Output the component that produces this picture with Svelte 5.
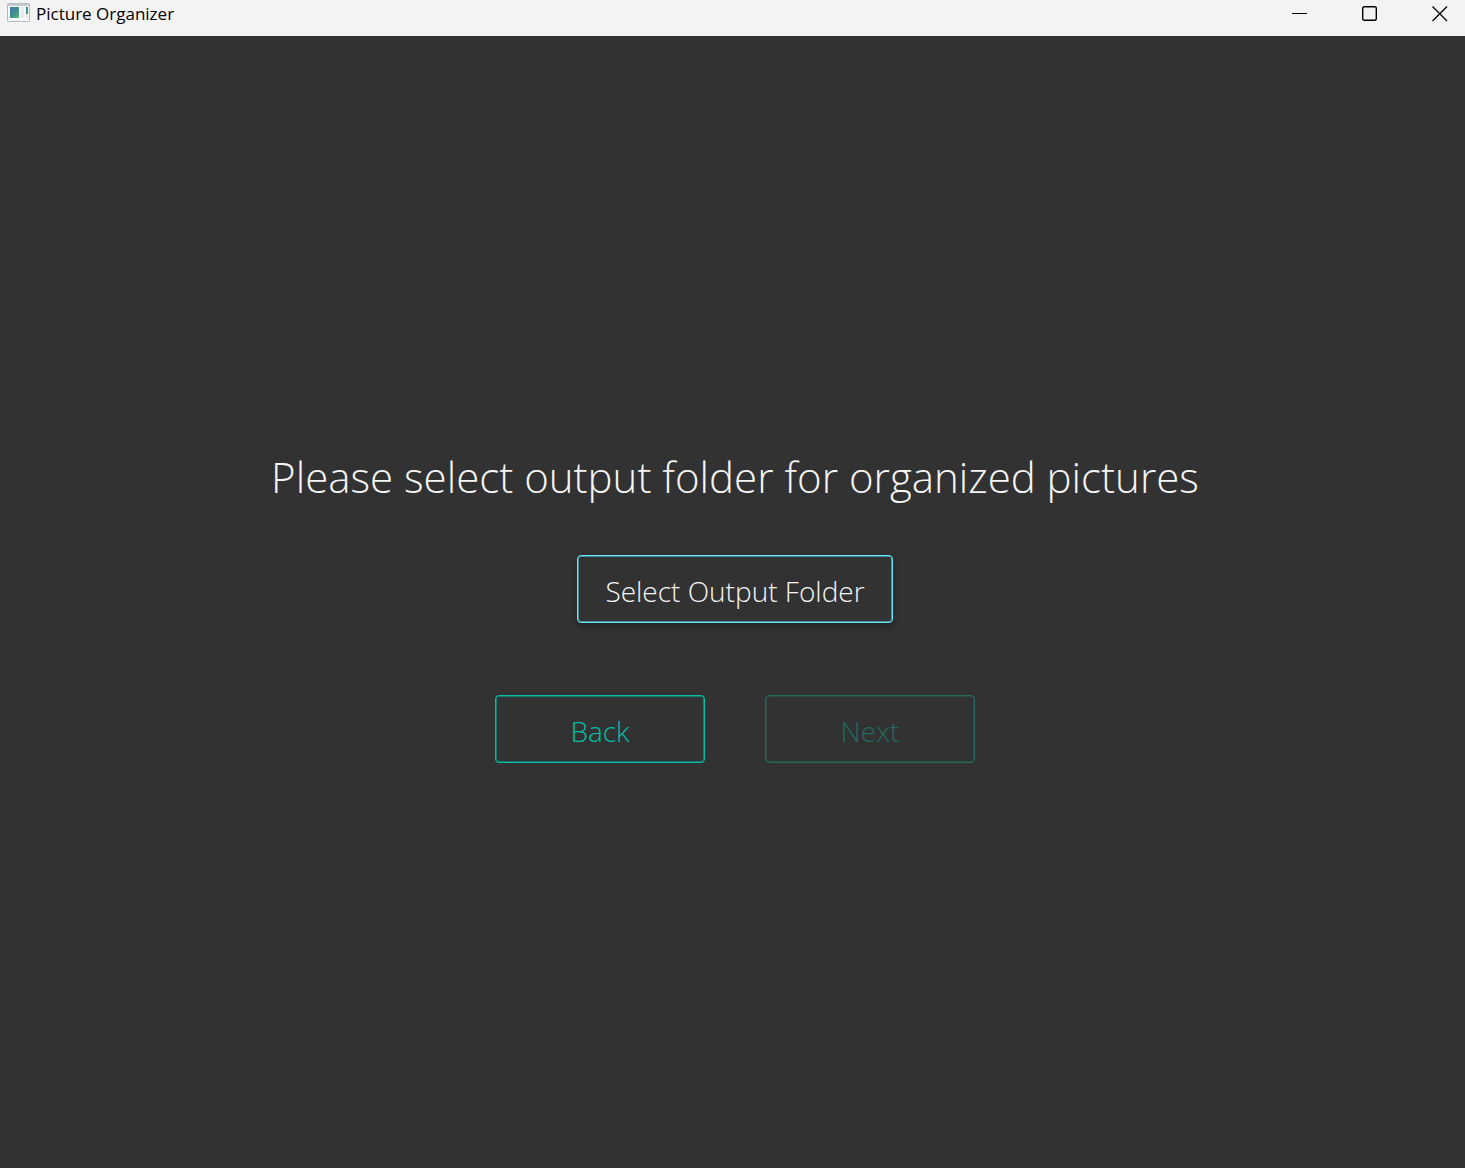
<script lang="ts">
  export let title = "Picture Organizer";
  export let outputFolder = "";

  const noop = () => {};
</script>

<div class="window">
  <header class="titlebar">
    <svg class="app-icon" width="24" height="20" viewBox="0 0 24 20" aria-hidden="true">
      <defs>
        <linearGradient id="pane" x1="0" y1="0" x2="1" y2="1">
          <stop offset="0" stop-color="#4479a6" />
          <stop offset="0.5" stop-color="#3f8f92" />
          <stop offset="1" stop-color="#62b878" />
        </linearGradient>
      </defs>
      <rect x="0.5" y="0.5" width="22" height="18" rx="1" fill="#f6f8fa" stroke="#b3b8c1" />
      <rect x="1" y="1" width="21" height="2" fill="#c5cbd5" />
      <rect x="3" y="4" width="9" height="11" fill="url(#pane)" />
      <rect x="14" y="4" width="3" height="11" fill="#e9ebea" />
      <rect x="19" y="4" width="2" height="7" fill="url(#pane)" />
      <rect x="19" y="11" width="2" height="4" fill="#e9ebea" />
    </svg>
    <span class="title">{title}</span>

    <div class="controls">
      <button type="button" aria-label="Minimize" on:click={noop}>
        <svg width="16" height="16" viewBox="0 0 16 16"><path d="M0 7.5h15" /></svg>
      </button>
      <button type="button" aria-label="Maximize" on:click={noop}>
        <svg width="16" height="16" viewBox="0 0 16 16">
          <rect x="0.7" y="0.7" width="13.6" height="13.6" rx="1.5" stroke-width="1.4" />
        </svg>
      </button>
      <button type="button" aria-label="Close" on:click={noop}>
        <svg width="16" height="16" viewBox="0 0 16 16">
          <path d="M0.5 0.5l14.5 14.5M15 0.5L0.5 15" stroke-width="1.3" />
        </svg>
      </button>
    </div>
  </header>

  <main>
    <h1>Please select output folder for organized pictures</h1>
    <button type="button" class="btn select" on:click={noop}>Select Output Folder</button>
    <div class="nav">
      <button type="button" class="btn step" on:click={noop}>Back</button>
      <button type="button" class="btn step" disabled={!outputFolder}>Next</button>
    </div>
  </main>
</div>

<style>
  :global(body) {
    margin: 0;
    background: #323232;
  }

  .window {
    display: flex;
    flex-direction: column;
    min-height: 100vh;
    font-family: "Segoe UI", "Open Sans", "Noto Sans", sans-serif;
    background: #323232;
  }

  .titlebar {
    display: flex;
    align-items: flex-start;
    height: 36px;
    background: #f3f3f3;
  }

  .app-icon {
    flex: none;
    margin: 3px 5px 0 7px;
  }

  .title {
    font-size: 17px;
    line-height: 28px;
    color: #000;
  }

  .controls {
    display: flex;
    margin-left: auto;
  }

  .controls button {
    display: flex;
    justify-content: center;
    width: 70px;
    padding: 6px 0;
    border: 0;
    background: none;
  }

  .controls button:last-child {
    width: 50px;
    margin-left: 10px;
  }

  .controls svg {
    fill: none;
    stroke: #000;
  }

  main {
    display: flex;
    flex: 1;
    flex-direction: column;
    align-items: center;
    justify-content: center;
    padding: 4px 0 0 5px;
  }

  h1 {
    margin: 0 0 46px;
    font-size: 42px;
    font-weight: 300;
    line-height: 64px;
    text-align: center;
    color: #f5f5f5;
  }

  .btn {
    --line: #00bfa5;
    --edge: #19796c;
    height: 68px;
    padding: 3px 27px 0;
    border: 1px solid var(--line);
    border-radius: 4px;
    background: #323232;
    box-shadow: inset 0 0 0 1px var(--edge);
    color: var(--line);
    font-family: inherit;
    font-size: 28px;
    font-weight: 300;
    line-height: 40px;
  }

  .select {
    --line: #62e8fa;
    --edge: #4a8d96;
    box-shadow:
      inset 0 0 0 1px var(--edge),
      0 3px 6px rgba(0, 0, 0, 0.35);
    color: #f5f5f5;
  }

  .nav {
    display: flex;
    gap: 60px;
    margin-top: 72px;
  }

  .step {
    width: 210px;
  }

  .step:disabled {
    --line: #23695f;
    --edge: #2a4d48;
  }
</style>
